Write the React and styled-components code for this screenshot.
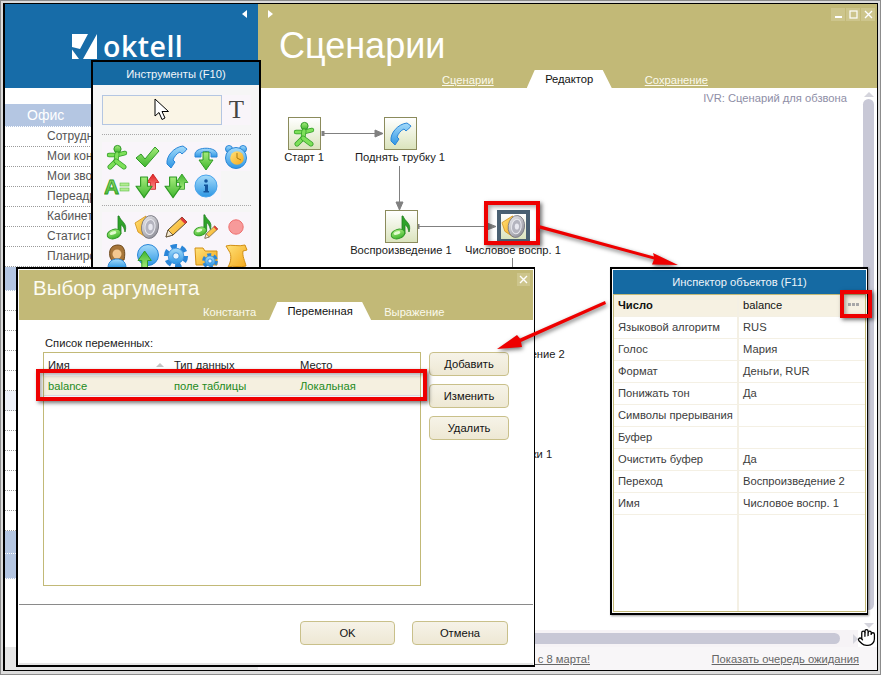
import styled, { createGlobalStyle } from "styled-components";
import { Hand } from "lucide-react";

const GlobalStyle = createGlobalStyle`
  html, body {
    margin: 0;
    padding: 0;
    background: #e4e4e4;
  }
  * {
    box-sizing: border-box;
  }
  body {
    font-family: "Liberation Sans", Arial, sans-serif;
    font-size: 11.2px;
    color: #222;
  }
`;

const BLUE = "#176ca8";
const OLIVE = "#c2b977";

const NAV_TOP = ["Сотрудники", "Мои контакты", "Мои звонки", "Переадресация", "Кабинет", "Статистика", "Планирование"];

const INSPECTOR_ROWS = [
  ["Число", "balance"],
  ["Языковой алгоритм", "RUS"],
  ["Голос", "Мария"],
  ["Формат", "Деньги, RUR"],
  ["Понижать тон", "Да"],
  ["Символы прерывания", ""],
  ["Буфер", ""],
  ["Очистить буфер", "Да"],
  ["Переход", "Воспроизведение 2"],
  ["Имя", "Числовое воспр. 1"],
];

/* ---------- glossy toolbar icons ---------- */

const IconDefs = () => (
  <svg width="0" height="0" style={{ position: "absolute" }}>
    <defs>
      <linearGradient id="gGreen" x1="0" y1="0" x2="0" y2="1">
        <stop offset="0" stopColor="#a6ec7c" />
        <stop offset="1" stopColor="#3fb52e" />
      </linearGradient>
      <linearGradient id="gBlue" x1="0" y1="0" x2="0" y2="1">
        <stop offset="0" stopColor="#a6dcfa" />
        <stop offset="1" stopColor="#2e96e4" />
      </linearGradient>
      <linearGradient id="gYellow" x1="0" y1="0" x2="1" y2="1">
        <stop offset="0" stopColor="#ffe27a" />
        <stop offset="1" stopColor="#f4a81c" />
      </linearGradient>
      <linearGradient id="gGray" x1="0" y1="0" x2="1" y2="1">
        <stop offset="0" stopColor="#eeeef2" />
        <stop offset="1" stopColor="#85858f" />
      </linearGradient>
      <linearGradient id="gRed" x1="0" y1="0" x2="0" y2="1">
        <stop offset="0" stopColor="#ff8c8c" />
        <stop offset="1" stopColor="#df2020" />
      </linearGradient>
    </defs>
  </svg>
);

const Tube = ({ d, w = 3.5, edge = "#2f9a25", core = "#7ee05a" }) => (
  <>
    <path d={d} fill="none" stroke={edge} strokeWidth={w + 1.4} strokeLinecap="round" strokeLinejoin="round" />
    <path d={d} fill="none" stroke={core} strokeWidth={w} strokeLinecap="round" strokeLinejoin="round" />
  </>
);

const BlockArrow = ({ x, y, s = 1, up, fill = "url(#gGreen)", edge = "#2f9a25" }) => (
  <path
    transform={`translate(${x} ${y}) scale(${s}) ${up ? "rotate(180 7 9)" : ""}`}
    d="M4 0 H10 V8 H14 L7 18 L0 8 H4 Z"
    fill={fill}
    stroke={edge}
    strokeWidth="1"
    strokeLinejoin="round"
  />
);

const GearShape = ({ cx, cy, r }) => (
  <>
    <circle cx={cx} cy={cy} r={r} fill="none" stroke="#2a86d8" strokeWidth={r * 0.42} strokeDasharray={`${r * 0.62} ${r * 0.42}`} />
    <circle cx={cx} cy={cy} r={r * 0.78} fill="url(#gBlue)" stroke="#2a86d8" strokeWidth="0.8" />
    <circle cx={cx} cy={cy} r={r * 0.32} fill="#e6f4fd" stroke="#2a86d8" strokeWidth="0.8" />
  </>
);

const NoteShape = () => (
  <>
    <path d="M15 2 C17 8 24 9 21 18 C20 13 18 11 17 11 L17 20 L14 20 L14 2 Z" fill="#2fa32a" stroke="#1f7f1f" strokeWidth="0.8" />
    <ellipse cx="10" cy="20" rx="7" ry="4.6" transform="rotate(-18 10 20)" fill="url(#gGreen)" stroke="#2f9a25" />
    <ellipse cx="9" cy="19" rx="3.4" ry="1.6" transform="rotate(-18 9 19)" fill="#e2fbd0" />
  </>
);

const PencilShape = () => (
  <>
    <path d="M3 23 L5 16 L19 3 L24 8 L10 21 Z" fill="url(#gYellow)" stroke="#5a4a30" strokeWidth="1" strokeLinejoin="round" />
    <path d="M19 3 L24 8 L22 10 L17 5 Z" fill="#e03a3a" />
    <path d="M3 23 L5 16 L10 21 Z" fill="#f6ead2" stroke="#5a4a30" strokeWidth="0.8" />
  </>
);

const SpeakerShape = () => (
  <>
    <path d="M1 9 L12 2 L13 24 L4 18 Z" fill="url(#gYellow)" stroke="#d28f14" strokeWidth="0.8" />
    <ellipse cx="16" cy="13" rx="8.5" ry="11.5" transform="rotate(8 16 13)" fill="url(#gGray)" stroke="#70707a" strokeWidth="0.8" />
    <ellipse cx="16" cy="13" rx="5" ry="7.6" transform="rotate(8 16 13)" fill="#b4b4bf" stroke="#e8e8ee" />
    <ellipse cx="16.5" cy="13" rx="2.2" ry="3.2" fill="#e8e8f0" />
  </>
);

const RunShape = () => (
  <>
    <circle cx="13.5" cy="5" r="3.6" fill="url(#gGreen)" stroke="#2f9a25" />
    <Tube d="M5 11 L13 11 L21 9" w={3} />
    <Tube d="M13 10 L12 17 L6 23" />
    <Tube d="M12 17 L20 23" />
  </>
);

const PhoneShape = () => (
  <path
    d="M20 2 C11 3 3 12 4 20 L8 24 C9 22 11 20 12 18 L10 16 C11 13 14 9 17 8 L19 10 C21 8 23 7 24 5 Z"
    fill="url(#gBlue)"
    stroke="#2a86d8"
    strokeLinejoin="round"
  />
);

const ICONS = {
  run: <RunShape />,
  check: <path d="M2 14 L7 10 L11 15 L21 3 L25 7 L11 23 Z" fill="url(#gGreen)" stroke="#2f9a25" strokeLinejoin="round" />,
  phone: <PhoneShape />,
  phoneDown: (
    <>
      <path d="M2 11 C1 2 25 2 24 11 L24 13 L18 13 L18 9 C15 7 11 7 8 9 L8 13 L2 13 Z" fill="url(#gBlue)" stroke="#2a86d8" strokeLinejoin="round" />
      <BlockArrow x={6} y={8} />
    </>
  ),
  clock: (
    <>
      <circle cx="6" cy="5" r="3.5" fill="url(#gBlue)" stroke="#2a86d8" />
      <circle cx="20" cy="5" r="3.5" fill="url(#gBlue)" stroke="#2a86d8" />
      <circle cx="13" cy="14" r="10.5" fill="url(#gBlue)" stroke="#2a86d8" />
      <circle cx="14" cy="14" r="6.8" fill="url(#gYellow)" />
      <path d="M14 14 L14 9 M14 14 L18 16" stroke="#a87a10" strokeWidth="1" />
    </>
  ),
  assign: (
    <>
      <text x="0" y="21" fontFamily="Liberation Sans, sans-serif" fontWeight="700" fontSize="21" fill="url(#gGreen)" stroke="#2f9a25" strokeWidth="0.8">A</text>
      <rect x="16" y="10" width="9" height="3" fill="#b2ec92" stroke="#5cc048" strokeWidth="0.6" />
      <rect x="16" y="15" width="9" height="3" fill="#b2ec92" stroke="#5cc048" strokeWidth="0.6" />
    </>
  ),
  downRed: (
    <>
      <BlockArrow x={13} y={1} s={0.85} up fill="url(#gRed)" edge="#c81c1c" />
      <BlockArrow x={2} y={4} s={1.15} />
    </>
  ),
  downGreen: (
    <>
      <BlockArrow x={13} y={1} s={0.85} up />
      <BlockArrow x={2} y={4} s={1.15} />
    </>
  ),
  info: (
    <>
      <circle cx="13" cy="13" r="11" fill="url(#gBlue)" stroke="#4aa4ec" />
      <circle cx="13" cy="8" r="1.8" fill="#14549c" />
      <path d="M11 11.5 H15 V18 H16 V19.5 H10.5 V18 H12 V13 H11 Z" fill="#14549c" />
    </>
  ),
  note: <NoteShape />,
  speaker: <SpeakerShape />,
  pencil: <PencilShape />,
  notePencil: (
    <>
      <g transform="translate(-2 -1) scale(0.92)"><NoteShape /></g>
      <g transform="translate(10 10) scale(0.62)"><PencilShape /></g>
    </>
  ),
  record: <circle cx="13" cy="13" r="7.2" fill="#f79a9a" stroke="#ee6f6f" />,
  agent: (
    <>
      <path d="M6 14 C4 4 10 2 14 2 C20 2 22 8 20 17 L8 18 Z" fill="#a7763a" stroke="#6f4a1c" />
      <circle cx="13" cy="11" r="4.5" fill="#f3c890" />
      <path d="M4 25 C4 18 9 16 13 16 C17 16 22 18 22 25 Z" fill="url(#gBlue)" stroke="#2a86d8" />
    </>
  ),
  globe: (
    <>
      <circle cx="14" cy="12" r="10.5" fill="url(#gBlue)" stroke="#2a86d8" />
      <BlockArrow x={4} y={8} s={0.95} up />
    </>
  ),
  gear: <GearShape cx={13} cy={13} r={10} />,
  folder: (
    <>
      <path d="M2 5 L10 5 L12 8 L24 8 L24 22 L3 22 Z" fill="url(#gYellow)" stroke="#d28f14" strokeLinejoin="round" />
      <GearShape cx={17} cy={18} r={6.5} />
    </>
  ),
  scroll: (
    <path
      d="M3 3 C8 1 16 4 22 2 L24 7 L20 8 C19 13 22 18 23 23 C18 25 10 22 5 24 C8 19 9 12 6 8 Z"
      fill="url(#gYellow)"
      stroke="#d28f14"
      strokeLinejoin="round"
    />
  ),
};

const Icon = ({ name, size = 26 }) => (
  <svg width={size} height={size} viewBox="0 0 26 26">
    {ICONS[name]}
  </svg>
);

/* ---------- window shell ---------- */

const Page = styled.div`
  position: relative;
  width: 881px;
  height: 675px;
  overflow: hidden;
  padding: 3px 3px 4px;
  background: #dcdcdc;
  box-shadow: inset 0 0 0 1px #8c8c8c;
`;

const AppWindow = styled.div`
  display: flex;
  height: 100%;
  background: #fff;
  border: 1px solid #000;
  border-left-width: 2px;
`;

const Sidebar = styled.aside`
  display: flex;
  flex-direction: column;
  flex: 0 0 253px;
`;

const LogoBar = styled.div`
  position: relative;
  display: flex;
  align-items: center;
  gap: 6px;
  flex: 0 0 84px;
  padding-left: 67px;
  background: ${BLUE};
`;

const LogoText = styled.span`
  font-family: "Open Sans", sans-serif;
  font-size: 28.5px;
  font-weight: 600;
  letter-spacing: 0.5px;
  line-height: 1;
  color: #fff;
`;

const Collapse = styled.span`
  position: absolute;
  top: 6px;
  ${(p) => (p.$right ? "left: 10px;" : "right: 11px;")}
  width: 0;
  height: 0;
  border-top: 4px solid transparent;
  border-bottom: 4px solid transparent;
  ${(p) => (p.$right ? "border-left: 5px solid #fff;" : "border-right: 5px solid #fff;")}
`;

const Nav = styled.nav`
  flex: 1;
  padding-top: 16px;
`;

const NavBand = styled.div`
  height: ${(p) => p.$h || 23}px;
  padding-left: 22px;
  font-size: 14px;
  line-height: 23px;
  color: #fff;
  background: #b4c6e2;
  border-bottom: 1px dotted #fff;
`;

const NavItem = styled.div`
  height: 20px;
  padding-left: 42px;
  line-height: 19px;
  font-size: 12px;
  color: #555;
  background: ${(p) => (p.$pale ? "#eef2fa" : "#fff")};
  border-bottom: 1px dotted #9a9a9a;
`;

const SideFooter = styled.div`
  flex: 0 0 23px;
  background: #e6e6e6;
`;

const Main = styled.main`
  position: relative;
  display: flex;
  flex-direction: column;
  flex: 1;
  min-width: 0;
`;

const TitleBar = styled.header`
  position: relative;
  display: flex;
  flex-direction: column;
  justify-content: space-between;
  flex: 0 0 84px;
  background: ${OLIVE};
`;

const PageTitle = styled.h1`
  margin: 0;
  padding: 22px 0 0 21px;
  font-size: 36px;
  font-weight: 400;
  line-height: 40px;
  color: #fff;
`;

const WindowButtons = styled.div`
  position: absolute;
  top: 4px;
  right: 2px;
  display: flex;
  gap: 1px;
`;

const WindowButton = styled.span`
  display: flex;
  align-items: center;
  justify-content: center;
  width: 14px;
  height: 13px;
  background: #cdc58c;
`;

const TabRow = styled.div`
  display: flex;
  align-items: flex-end;
  gap: ${(p) => p.$gap}px;
  height: 18px;
  padding-left: ${(p) => p.$left}px;
`;

const TabLink = styled.span`
  line-height: 16px;
  color: #fbf9ec;
  text-decoration: ${(p) => (p.$plain ? "none" : "underline")};
`;

const ActiveTab = styled.span`
  flex: 0 0 ${(p) => p.$w}px;
  height: 18px;
  line-height: 19px;
  text-align: center;
  color: #111;
  background: #fff;
  clip-path: polygon(8px 0, calc(100% - 9px) 0, 100% 100%, 0 100%);
`;

/* ---------- scenario canvas ---------- */

const Body = styled.div`
  display: flex;
  flex: 1;
  min-height: 0;
`;

const Canvas = styled.section`
  position: relative;
  flex: 1;
  overflow: hidden;
`;

const ScenarioName = styled.div`
  position: absolute;
  top: 4px;
  right: 12px;
  color: #8e8ea6;
`;

const Wires = styled.svg`
  position: absolute;
  inset: 0;
`;

const Node = styled.div`
  position: absolute;
  left: ${(p) => p.$x - 70}px;
  top: ${(p) => p.$y}px;
  display: flex;
  flex-direction: column;
  align-items: center;
  width: 140px;
`;

const NodeBox = styled.div`
  display: flex;
  align-items: center;
  justify-content: center;
  width: 33px;
  height: 33px;
  background: linear-gradient(#fff, #dbe4bd);
  border: ${(p) => (p.$active ? "4px solid #4a6072" : "1px solid #8b8b5c")};
`;

const NodeLabel = styled.div`
  line-height: 14px;
  white-space: nowrap;
  color: #1a1a1a;
`;

const VScroll = styled.div`
  display: flex;
  flex-direction: column;
  align-items: center;
  flex: 0 0 18px;
  padding: 4px 3px 2px 4px;
`;

const ScrollThumb = styled.div`
  flex: 1;
  width: 11px;
  margin: 2px 0 13px;
  background: #c8c8d6;
  border-radius: 6px;
`;

const Triangle = styled.span`
  width: 0;
  height: 0;
  ${(p) =>
    p.$dir === "up" || p.$dir === "down"
      ? `border-left: 5px solid transparent;
         border-right: 5px solid transparent;
         border-${p.$dir === "up" ? "bottom" : "top"}: 5px solid #d4d4dc;`
      : `border-top: 5px solid transparent;
         border-bottom: 5px solid transparent;
         border-left: 5px solid #d4d4dc;`}
`;

const HScroll = styled.div`
  display: flex;
  align-items: center;
  flex: 0 0 17px;
  background: #f6f3f6;
`;

const HThumb = styled.div`
  flex: 0 0 582px;
  height: 11px;
  background: #c8c8d6;
  border-radius: 0 6px 6px 0;
`;

const HArrow = styled.div`
  display: flex;
  margin-left: 13px;
`;

const ScrollCorner = styled.div`
  margin-left: auto;
  width: 19px;
  height: 100%;
  background: #fff;
`;

const HandCursor = styled.div`
  position: absolute;
  right: 1px;
  bottom: 23px;
  display: flex;
`;

const Footer = styled.footer`
  display: flex;
  align-items: center;
  justify-content: space-between;
  flex: 0 0 23px;
  padding-right: 18px;
  background: #f8f6f8;
`;

const FooterLink = styled.span`
  flex: ${(p) => (p.$fill ? "0 0 332px" : "none")};
  text-align: right;
  color: #666;
  text-decoration: underline;
`;

/* ---------- floating tools panel ---------- */

const ToolsPanel = styled.div`
  position: absolute;
  left: 91px;
  top: 60px;
  width: 170px;
  height: 212px;
  background: #f6f6f6;
  border: 2px solid #000;
  border-bottom: 0;
`;

const PanelHeader = styled.div`
  height: 23px;
  line-height: 24px;
  text-align: center;
  color: #f2f6fa;
  background: #156aa3;
`;

const PanelBody = styled.div`
  padding: 10px 0 0 9px;
`;

const ToolRow = styled.div`
  display: flex;
  width: ${(p) => p.$cells * 29.8}px;
  height: ${(p) => p.$h || 29}px;
  background: #f9f5fa;
`;

const ToolCell = styled.div`
  display: flex;
  align-items: center;
  justify-content: center;
  flex: 0 0 29.8px;
`;

const PointerTool = styled.div`
  display: flex;
  justify-content: center;
  padding-top: 2px;
  flex: 0 0 120px;
  background: #faf5e6;
  border: 1.5px solid #b4c6e2;
`;

const TextTool = styled.div`
  flex: 1;
  text-align: center;
  font-family: "Liberation Serif", serif;
  font-size: 25px;
  line-height: 29px;
  color: #444;
`;

const DottedRule = styled.div`
  width: 149px;
  margin: ${(p) => p.$top}px 0 ${(p) => p.$bottom}px;
  border-top: 1px dotted #a8a8a8;
`;

/* ---------- argument dialog ---------- */

const Dialog = styled.div`
  position: absolute;
  left: 16px;
  top: 267px;
  display: flex;
  flex-direction: column;
  width: 519px;
  height: 400px;
  padding: 1px 1px 0;
  background: #fff;
  border: 2px solid #000;
  border-right-width: 1px;
`;

const DialogHead = styled.div`
  position: relative;
  display: flex;
  flex-direction: column;
  justify-content: space-between;
  flex: 0 0 50px;
  background: ${OLIVE};
`;

const DialogTitle = styled.div`
  padding: 6px 0 0 14px;
  font-size: 20.5px;
  line-height: 24px;
  color: #fdfcf2;
`;

const DialogClose = styled.span`
  position: absolute;
  top: 3px;
  right: 3px;
  display: flex;
  align-items: center;
  justify-content: center;
  width: 13px;
  height: 13px;
  background: #cdc58c;
`;

const DialogBody = styled.div`
  flex: 1;
  padding: 16px 0 0 24px;
`;

const ListCaption = styled.div`
  line-height: 14px;
  margin: 0 0 2px 2px;
  color: #222;
`;

const ListArea = styled.div`
  display: flex;
  gap: 8px;
`;

const VarList = styled.div`
  flex: 0 0 378px;
  height: 234px;
  border: 1px solid ${OLIVE};
`;

const VarRow = styled.div`
  display: grid;
  grid-template-columns: 126px 126px 1fr;
  height: ${(p) => p.$h}px;
  padding-left: 4px;
  align-items: center;
  color: ${(p) => (p.$selected ? "#1c8a1c" : "#222")};
  background: ${(p) => (p.$selected ? "#f5f0e0" : "#fff")};
  border-bottom: ${(p) => (p.$selected ? "1px solid #dcdce4" : "0")};
`;

const SortCell = styled.span`
  display: flex;
  align-items: center;
  justify-content: space-between;
  padding-right: 10px;
`;

const SortMark = styled.span`
  width: 0;
  height: 0;
  border-left: 4px solid transparent;
  border-right: 4px solid transparent;
  border-bottom: 4px solid #c4c4c4;
`;

const ButtonColumn = styled.div`
  display: flex;
  flex-direction: column;
  gap: 8px;
`;

const Button = styled.button`
  width: ${(p) => p.$w}px;
  height: 24px;
  padding: 0;
  font: inherit;
  color: #111;
  background: linear-gradient(#f6f3e8, #eee8d4);
  border: 1px solid #c9c08a;
  border-radius: 4px;
`;

const DialogFoot = styled.div`
  display: flex;
  justify-content: flex-end;
  gap: 17px;
  flex: 0 0 61px;
  padding: 16px 25px 0 0;
  border-top: 1px solid #8a8a8a;
  border-bottom: 2px solid #e4e4e4;
`;

/* ---------- object inspector ---------- */

const Inspector = styled.div`
  position: absolute;
  left: 610px;
  top: 267px;
  display: flex;
  flex-direction: column;
  width: 258px;
  height: 348px;
  padding: 1px;
  background: #fff;
  border: 2px solid #000;
  border-right-width: 1px;
  box-shadow: 1px 1px 2px rgba(0, 0, 0, 0.4);
`;

const InspectorHead = styled.div`
  flex: 0 0 24px;
  line-height: 24px;
  text-align: center;
  color: #eef4f9;
  background: #156aa3;
`;

const PropGrid = styled.div`
  display: flex;
  flex-direction: column;
  flex: 1;
  border: 1px solid ${OLIVE};
`;

const PropRow = styled.div`
  position: relative;
  display: grid;
  grid-template-columns: 125px 1fr;
  flex: ${(p) => (p.$fill ? 1 : "0 0 20px")};
  background: ${(p) => (p.$selected ? "#f6f1e2" : "#fff")};
  border-bottom: ${(p) => (p.$fill ? "0" : "1px solid #f4f0e4")};
`;

const PropName = styled.div`
  padding-left: 4px;
  line-height: 21px;
  white-space: nowrap;
  font-weight: ${(p) => (p.$strong ? 700 : 400)};
  color: ${(p) => (p.$strong ? "#111" : "#3c3c3c")};
  border-right: 2px solid #f4f0e4;
`;

const PropValue = styled.div`
  padding-left: 4px;
  line-height: 21px;
  color: ${(p) => (p.$strong ? "#111" : "#3c3c3c")};
`;

const MoreButton = styled.span`
  position: absolute;
  right: 6px;
  top: 8px;
  width: 11px;
  height: 3px;
  background: repeating-linear-gradient(90deg, #a8a8a8 0 3px, transparent 3px 4px);
`;

/* ---------- red callouts drawn over the window ---------- */

const Callout = styled.div`
  position: absolute;
  left: ${(p) => p.$x}px;
  top: ${(p) => p.$y}px;
  width: ${(p) => p.$w}px;
  height: ${(p) => p.$h}px;
  border: 4px solid #ee0000;
  box-shadow: 2px 2px 4px rgba(0, 0, 0, 0.55), inset 2px 2px 4px rgba(0, 0, 0, 0.35);
`;

const CalloutArrows = styled.svg`
  position: absolute;
  left: 0;
  top: 0;
  pointer-events: none;
  filter: drop-shadow(1px 2px 2px rgba(0, 0, 0, 0.55));
`;

const Cross = ({ color = "#fff", size = 9 }) => (
  <svg width={size} height={size} viewBox="0 0 9 9">
    <path d="M1 1 L8 8 M8 1 L1 8" stroke={color} strokeWidth="1.4" />
  </svg>
);

const toolGroups = [
  [["run", "check", "phone", "phoneDown", "clock"], ["assign", "downRed", "downGreen", "info"]],
  [["note", "speaker", "pencil", "notePencil", "record"], ["agent", "globe", "gear", "folder", "scroll"]],
];

const ToolGroup = ({ rows }) =>
  rows.map((row) => (
    <ToolRow key={row[0]} $cells={row.length}>
      {row.map((name) => (
        <ToolCell key={name}>
          <Icon name={name} />
        </ToolCell>
      ))}
    </ToolRow>
  ));

export default function App() {
  return (
    <Page>
      <GlobalStyle />
      <IconDefs />
      <AppWindow>
        <Sidebar>
          <LogoBar>
            <svg width="25" height="25" viewBox="0 0 25 25">
              <path d="M0 0 H25 V25 H0 Z" fill="#fff" />
              <path d="M16 0 L25 0 L11 25 L7 25 L0 15.5 L0 13 L8 15 Z" fill={BLUE} />
            </svg>
            <LogoText>oktell</LogoText>
            <Collapse />
          </LogoBar>
          <Nav>
            <NavBand>Офис</NavBand>
            {NAV_TOP.map((item) => (
              <NavItem key={item}>{item}</NavItem>
            ))}
            <NavBand $h={24} />
            {Array.from({ length: 12 }, (_, i) => (
              <NavItem key={i} $pale={i === 5} />
            ))}
            <NavBand />
            <NavBand $h={25} />
          </Nav>
          <SideFooter />
        </Sidebar>

        <Main>
          <TitleBar>
            <Collapse $right />
            <WindowButtons>
              <WindowButton>
                <svg width="9" height="9" viewBox="0 0 9 9">
                  <rect x="1" y="6" width="7" height="2" fill="#fff" />
                </svg>
              </WindowButton>
              <WindowButton>
                <svg width="9" height="9" viewBox="0 0 9 9">
                  <rect x="1" y="1" width="7" height="7" fill="none" stroke="#fff" strokeWidth="1.2" />
                </svg>
              </WindowButton>
              <WindowButton>
                <Cross />
              </WindowButton>
            </WindowButtons>
            <PageTitle>Сценарии</PageTitle>
            <TabRow $left={184} $gap={33}>
              <TabLink>Сценарии</TabLink>
              <ActiveTab $w={85}>Редактор</ActiveTab>
              <TabLink>Сохранение</TabLink>
            </TabRow>
          </TitleBar>

          <Body>
            <Canvas>
              <ScenarioName>IVR: Сценарий для обзвона</ScenarioName>
              <Wires width="605" height="560">
                <g stroke="#808080" strokeWidth="1" fill="#808080">
                  <path d="M64 45.5 H122" />
                  <rect x="64" y="43.5" width="2" height="4" />
                  <path d="M117 42 L125 45.5 L117 49 Z" />
                  <path d="M141.5 78 V119" />
                  <path d="M138 114 L141.5 122 L145 114 Z" />
                  <path d="M160 138.5 H234" />
                  <rect x="159" y="136.5" width="2" height="4" />
                  <path d="M229 135 L238 138.5 L229 142 Z" />
                  <path d="M254.5 170 V200" />
                </g>
              </Wires>
              <Node $x={46} $y={29}>
                <NodeBox><Icon name="run" /></NodeBox>
                <NodeLabel>Старт 1</NodeLabel>
              </Node>
              <Node $x={142} $y={29}>
                <NodeBox><Icon name="phone" /></NodeBox>
                <NodeLabel>Поднять трубку 1</NodeLabel>
              </Node>
              <Node $x={143} $y={122}>
                <NodeBox><Icon name="note" /></NodeBox>
                <NodeLabel>Воспроизведение 1</NodeLabel>
              </Node>
              <Node $x={255} $y={122}>
                <NodeBox $active><Icon name="speaker" size={25} /></NodeBox>
                <NodeLabel>Числовое воспр. 1</NodeLabel>
              </Node>
              <Node $x={256} $y={226}>
                <NodeBox><Icon name="note" /></NodeBox>
                <NodeLabel>Воспроизведение 2</NodeLabel>
              </Node>
              <Node $x={245} $y={326}>
                <NodeBox><Icon name="phone" /></NodeBox>
                <NodeLabel>Положить трубки 1</NodeLabel>
              </Node>
            </Canvas>
            <VScroll>
              <Triangle $dir="up" />
              <ScrollThumb />
              <Triangle $dir="down" />
            </VScroll>
          </Body>

          <HScroll>
            <HThumb />
            <HArrow><Triangle /></HArrow>
            <ScrollCorner />
          </HScroll>
          <HandCursor>
            <Hand size={19} color="#000" fill="#fff" strokeWidth={1.6} />
          </HandCursor>

          <Footer>
            <FooterLink $fill>Поздравляем с 8 марта!</FooterLink>
            <FooterLink>Показать очередь ожидания</FooterLink>
          </Footer>
        </Main>
      </AppWindow>

      <ToolsPanel>
        <PanelHeader>Инструменты (F10)</PanelHeader>
        <PanelBody>
          <ToolRow $cells={5} $h={30}>
            <PointerTool>
              <svg width="16" height="24" viewBox="0 0 16 24">
                <path d="M1 1 L1 18 L5 14.5 L8 21.5 L11 20 L8 13.5 L14.5 13.5 Z" fill="#fff" stroke="#000" strokeWidth="1" />
              </svg>
            </PointerTool>
            <TextTool>T</TextTool>
          </ToolRow>
          <DottedRule $top={9} $bottom={7} />
          <ToolGroup rows={toolGroups[0]} />
          <DottedRule $top={5} $bottom={6} />
          <ToolGroup rows={toolGroups[1]} />
        </PanelBody>
      </ToolsPanel>

      <Callout $x={484} $y={201} $w={56} $h={44} />

      <Inspector>
        <InspectorHead>Инспектор объектов (F11)</InspectorHead>
        <PropGrid>
          {INSPECTOR_ROWS.map(([name, value], i) => (
            <PropRow key={name} $selected={i === 0}>
              <PropName $strong={i === 0}>{name}</PropName>
              <PropValue $strong={i === 0}>{value}</PropValue>
              {i === 0 && <MoreButton />}
            </PropRow>
          ))}
          <PropRow $fill>
            <PropName />
            <PropValue />
          </PropRow>
        </PropGrid>
      </Inspector>
      <Callout $x={840} $y={290} $w={32} $h={28} />

      <Dialog>
        <DialogHead>
          <DialogTitle>Выбор аргумента</DialogTitle>
          <DialogClose><Cross /></DialogClose>
          <TabRow $left={184} $gap={13}>
            <TabLink $plain>Константа</TabLink>
            <ActiveTab $w={102}>Переменная</ActiveTab>
            <TabLink $plain>Выражение</TabLink>
          </TabRow>
        </DialogHead>
        <DialogBody>
          <ListCaption>Список переменных:</ListCaption>
          <ListArea>
            <VarList>
              <VarRow $h={23}>
                <SortCell>Имя <SortMark /></SortCell>
                <span>Тип данных</span>
                <span>Место</span>
              </VarRow>
              <VarRow $h={20} $selected>
                <span>balance</span>
                <span>поле таблицы</span>
                <span>Локальная</span>
              </VarRow>
            </VarList>
            <ButtonColumn>
              <Button $w={80}>Добавить</Button>
              <Button $w={80}>Изменить</Button>
              <Button $w={80}>Удалить</Button>
            </ButtonColumn>
          </ListArea>
        </DialogBody>
        <DialogFoot>
          <Button $w={95}>OK</Button>
          <Button $w={96}>Отмена</Button>
        </DialogFoot>
      </Dialog>
      <Callout $x={36} $y={369} $w={391} $h={32} />

      <CalloutArrows width="881" height="675">
        <polygon points="539,225 654,256.5 653,253 678,265 652,264.5 654,259.5 539,228.5" fill="#ee0000" />
        <polygon points="605,301 520,338.5 517,335 497,349 522,347 521,342 606,304" fill="#ee0000" />
      </CalloutArrows>
    </Page>
  );
}
